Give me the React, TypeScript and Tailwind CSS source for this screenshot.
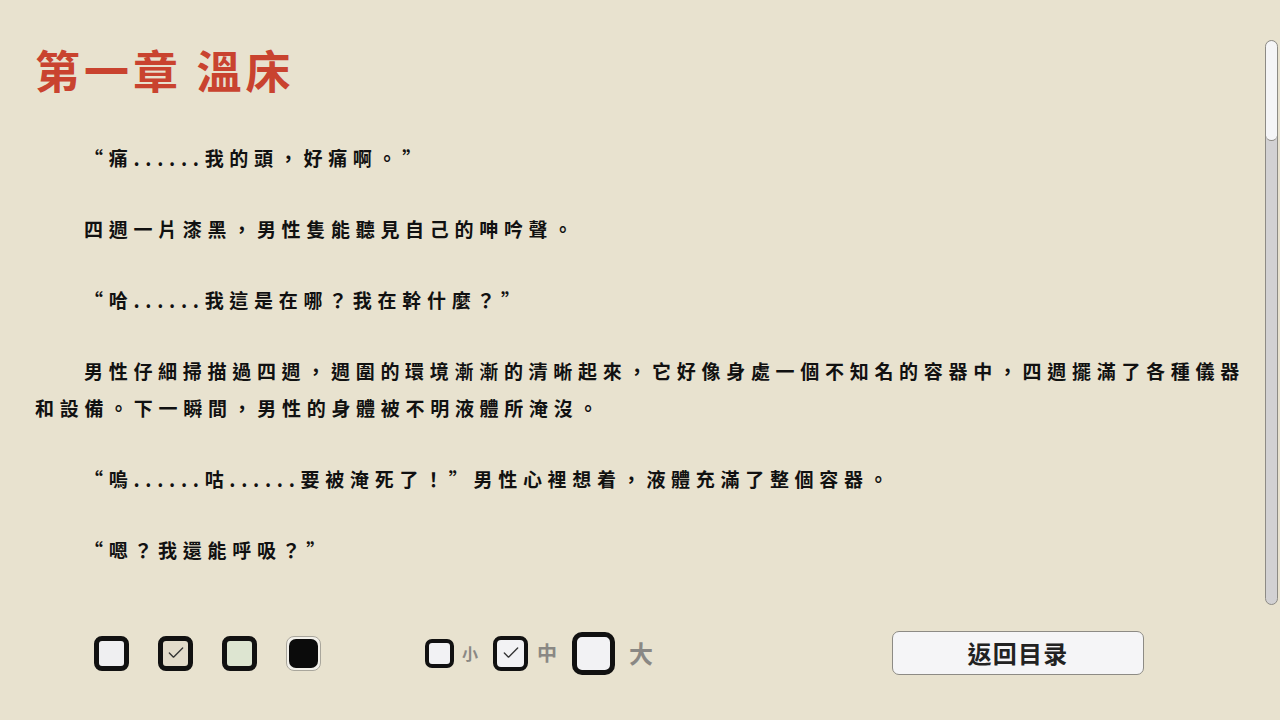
import { Check } from "lucide-react";

const paragraphs: string[] = [
  "“痛......我的頭，好痛啊。”",
  "四週一片漆黑，男性隻能聽見自己的呻吟聲。",
  "“哈......我這是在哪？我在幹什麼？”",
  "男性仔細掃描過四週，週圍的環境漸漸的清晰起來，它好像身處一個不知名的容器中，四週擺滿了各種儀器和設備。下一瞬間，男性的身體被不明液體所淹沒。",
  "“嗚......咕......要被淹死了！”男性心裡想着，液體充滿了整個容器。",
  "“嗯？我還能呼吸？”",
];

const fontStack = "font-['Noto_Sans_CJK_TC','Noto_Sans_CJK_SC',sans-serif]";

function ThemeBox({ fill, checked, dark }: { fill: string; checked?: boolean; dark?: boolean }) {
  return (
    <button
      type="button"
      className={`flex h-[35px] w-[35px] items-center justify-center rounded-[8px] ${
        dark ? "border border-[#a9a69c] bg-[#f2f0ea] p-[2px]" : `border-[5px] border-[#111] ${fill}`
      }`}
    >
      {dark ? <span className="h-full w-full rounded-[7px] bg-[#0b0b0b]" /> : null}
      {checked ? <Check className="h-[20px] w-[20px] text-[#333]" strokeWidth={1.6} /> : null}
    </button>
  );
}

export default function App() {
  return (
    <div className={`flex h-[720px] w-full flex-col overflow-hidden bg-[#e8e2cf] ${fontStack}`}>
      <div className="flex min-h-0 flex-1">
        <main className="min-w-0 flex-1 pl-[35px] pr-[15px] pt-[42px]">
          <h1 className="text-[45px] font-bold leading-[56px] tracking-[0.09em] text-[#c9432f]">
            第一章 溫床
          </h1>
          <div className="mt-[41px] flex flex-col gap-[34px]">
            {paragraphs.map((text) => (
              <p
                key={text}
                className="indent-[49px] text-[19px] font-bold leading-[37px] tracking-[0.3em] text-[#111]"
              >
                {text}
              </p>
            ))}
          </div>
        </main>

        {/* reading pane scrollbar */}
        <div className="mb-[15px] mr-[2px] mt-[40px] flex w-[13px] flex-col overflow-hidden rounded-full border border-[#8d8b85] bg-[#d2d1d3]">
          <div className="h-[100px] rounded-full border-b border-[#8d8b85] bg-[#f5f5f7]" />
        </div>
      </div>

      <footer className="mb-[34px] flex h-[66px] items-center pl-[94px]">
        <div className="flex items-center gap-[29px]">
          <ThemeBox fill="bg-[#efeff1]" />
          <ThemeBox fill="bg-[#e3dccb]" checked />
          <ThemeBox fill="bg-[#dde5d1]" />
          <ThemeBox fill="" dark />
        </div>

        <div className="ml-[104px] flex items-center">
          <span className="h-[29px] w-[29px] rounded-[7px] border-[4px] border-[#111] bg-[#f2f2f4]" />
          <span className="ml-[8px] text-[16px] font-bold text-[#8a8884]">小</span>
          <span className="ml-[15px] flex h-[35px] w-[35px] items-center justify-center rounded-[8px] border-[4px] border-[#111] bg-[#f2f2f4]">
            <Check className="h-[20px] w-[20px] text-[#333]" strokeWidth={1.6} />
          </span>
          <span className="ml-[9px] text-[20px] font-bold text-[#8a8884]">中</span>
          <span className="ml-[15px] h-[43px] w-[43px] rounded-[10px] border-[5px] border-[#111] bg-[#f2f2f4]" />
          <span className="ml-[14px] text-[24px] font-bold text-[#8a8884]">大</span>
        </div>

        <button
          type="button"
          className="ml-[239px] flex h-[44px] w-[252px] items-center justify-center rounded-[7px] border border-[#8d8b85] bg-[#f5f5f7] text-[24px] font-bold tracking-[0.05em] text-[#222]"
        >
          返回目录
        </button>
      </footer>
    </div>
  );
}
